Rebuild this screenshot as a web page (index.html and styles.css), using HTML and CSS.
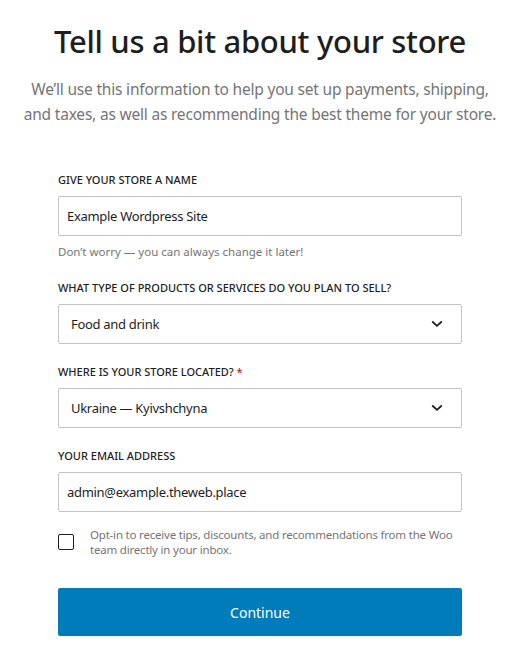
FILE: index.html
```html
<!DOCTYPE html>
<html lang="en">
<head>
<meta charset="utf-8">
<title>Store details</title>
<link rel="stylesheet" href="styles.css">
</head>
<body>
<div class="page">
  <h1 class="title">Tell us a bit about your store</h1>
  <p class="subtitle">We’ll use this information to help you set up payments, shipping,<br>and taxes, as well as recommending the best theme for your store.</p>
  <form class="form">
    <div class="field">
      <label class="label">GIVE YOUR STORE A NAME</label>
      <div class="control input">Example Wordpress Site</div>
      <p class="help">Don’t worry — you can always change it later!</p>
    </div>
    <div class="field">
      <label class="label">WHAT TYPE OF PRODUCTS OR SERVICES DO YOU PLAN TO SELL?</label>
      <div class="control select"><span>Food and drink</span>
        <svg class="chev" width="12" height="8" viewBox="0 0 12 8"><path d="M1.2 1.5 L6 5.8 L10.8 1.5" fill="none" stroke="#1e1e1e" stroke-width="1.8"/></svg>
      </div>
    </div>
    <div class="field">
      <label class="label">WHERE IS YOUR STORE LOCATED? <span class="req">*</span></label>
      <div class="control select"><span>Ukraine — Kyivshchyna</span>
        <svg class="chev" width="12" height="8" viewBox="0 0 12 8"><path d="M1.2 1.5 L6 5.8 L10.8 1.5" fill="none" stroke="#1e1e1e" stroke-width="1.8"/></svg>
      </div>
    </div>
    <div class="field">
      <label class="label">YOUR EMAIL ADDRESS</label>
      <div class="control input">admin@example.theweb.place</div>
    </div>
    <div class="optin">
      <span class="checkbox"></span>
      <span class="optin-text">Opt-in to receive tips, discounts, and recommendations from the Woo team directly in your inbox.</span>
    </div>
    <div class="button">Continue</div>
  </form>
</div>
</body>
</html>
```
FILE: styles.css
```css
html, body {
  margin: 0;
  padding: 0;
  background: #ffffff;
  overflow: hidden;
}
body {
  font-family: "Noto Sans", "DejaVu Sans", sans-serif;
  color: #1e1e1e;
}
.page {
  padding-left: 11px;
  display: flex;
  flex-direction: column;
  align-items: center;
}
.title {
  margin: 21px 0 0;
  font-size: 31px;
  line-height: 40px;
  font-weight: 500;
  letter-spacing: -0.3px;
  color: #1e1e1e;
  text-align: center;
}
.subtitle {
  margin: 16px 0 0;
  width: 490px;
  font-size: 15.5px;
  line-height: 25px;
  color: #757575;
  text-align: center;
  letter-spacing: -0.2px;
}
.form {
  width: 404px;
  margin-top: 45px;
  display: flex;
  flex-direction: column;
  gap: 20px;
}
.field {
  display: flex;
  flex-direction: column;
}
.label {
  font-size: 11px;
  line-height: 16px;
  font-weight: 500;
  color: #1e1e1e;
  margin-bottom: 8px;
}
.req {
  color: #cc1818;
}
.control {
  box-sizing: border-box;
  height: 40px;
  border: 1px solid #c3c4c7;
  border-radius: 2px;
  display: flex;
  align-items: center;
  font-size: 13px;
  letter-spacing: -0.3px;
  color: #1e1e1e;
}
.input {
  padding: 0 8px;
}
.select {
  padding: 0 18px 0 12px;
  justify-content: space-between;
}
.help {
  margin: 8px 0 0;
  font-size: 11.5px;
  line-height: 16px;
  color: #757575;
}
.optin {
  display: flex;
  align-items: center;
  gap: 16px;
  margin-top: -5px;
}
.checkbox {
  flex: none;
  box-sizing: border-box;
  width: 16px;
  height: 16px;
  border: 1px solid #1e1e1e;
  border-radius: 2px;
  background: #fff;
}
.optin-text {
  font-size: 11.5px;
  line-height: 15px;
  letter-spacing: -0.2px;
  color: #757575;
}
.button {
  margin-top: 11px;
  height: 48px;
  background: #007cba;
  border-radius: 2px;
  color: #ffffff;
  font-size: 14px;
  display: flex;
  align-items: center;
  justify-content: center;
}
```
